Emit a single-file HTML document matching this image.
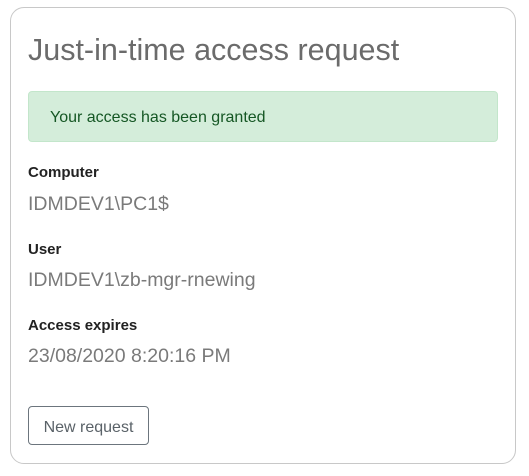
<!DOCTYPE html>
<html><head><style>
body{margin:0;background:#fff;font-family:"Liberation Sans",sans-serif;}
.card{position:absolute;left:10px;top:7px;width:506px;height:457px;border:1px solid #c8c8c8;border-radius:14px;box-sizing:border-box;}
.t{position:absolute;left:28px;top:33px;font-size:30.5px;color:#6b6b6b;font-weight:300;letter-spacing:0px;}
.alert{position:absolute;left:28px;top:91px;width:470px;height:51px;box-sizing:border-box;background:#d4edda;border:1px solid #c3e6cb;border-radius:4px;color:#155724;font-size:16px;padding:17px 0 0 21px;}
.l{position:absolute;left:28px;font-size:15px;font-weight:bold;color:#222;}
.v{position:absolute;left:28px;font-size:19.5px;color:#7a7a7a;}
.btn{position:absolute;left:28px;top:406px;width:121px;height:39px;box-sizing:border-box;border:1px solid #6c757d;border-radius:4px;color:#5a6268;font-size:16px;text-align:center;line-height:41px;}
</style></head><body>
<div class="card"></div>
<div class="t">Just-in-time access request</div>
<div class="alert">Your access has been granted</div>
<div class="l" style="top:164px">Computer</div>
<div class="v" style="top:193px">IDMDEV1\PC1$</div>
<div class="l" style="top:241px">User</div>
<div class="v" style="top:269px">IDMDEV1\zb-mgr-rnewing</div>
<div class="l" style="top:317px">Access expires</div>
<div class="v" style="top:345px">23/08/2020 8:20:16 PM</div>
<div class="btn">New request</div>
</body></html>
